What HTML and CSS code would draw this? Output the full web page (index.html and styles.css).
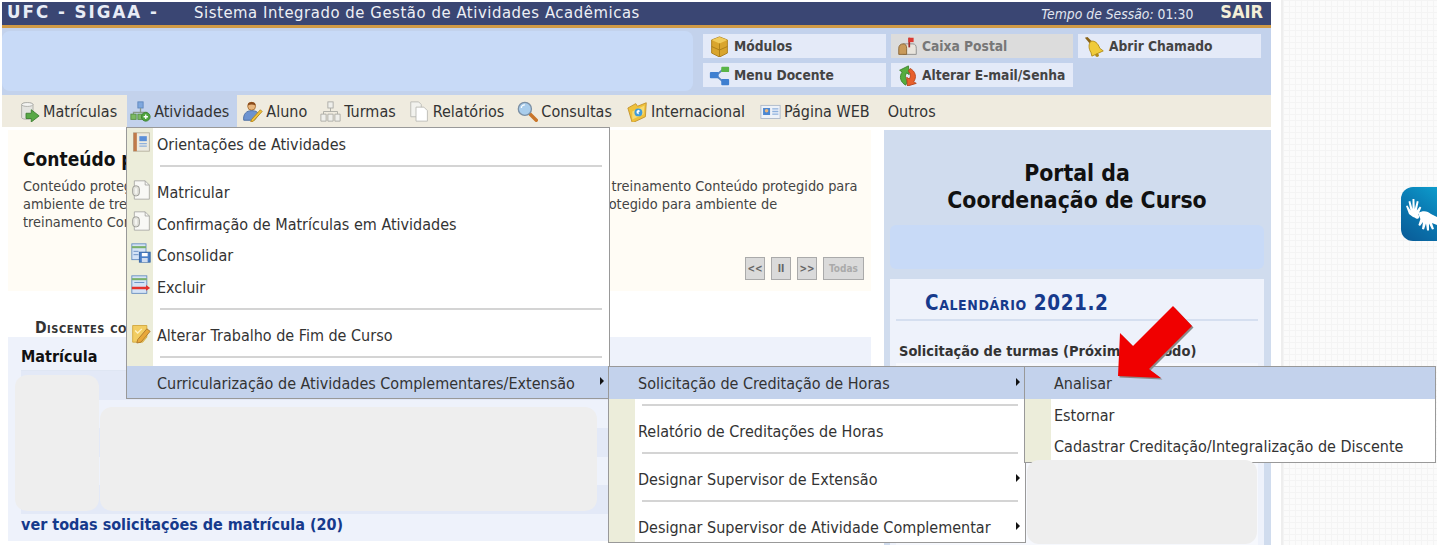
FILE: index.html
```html
<!DOCTYPE html>
<html lang="pt-BR">
<head>
  <meta charset="UTF-8">
  <title>UFC - SIGAA - Portal da Coordenação de Curso</title>
  <link rel="stylesheet" href="styles.css">
</head>
<body>
  <svg class="defs" width="0" height="0">
    <defs>
      <symbol id="i-matriculas" viewBox="0 0 24 24">
        <path d="M3 4c0-2.500 13-2.500 13 0v15c0 2.500-13 2.500-13 0z" fill="#e4e4e0" stroke="#a9a9a4"/>
        <ellipse cx="9.500" cy="4" rx="6.500" ry="2.200" fill="#f4f4f2" stroke="#a9a9a4"/>
        <path d="M8 14h6v-4l9 7-9 7v-4H8z" fill="#58a845" stroke="#3c7e30"/>
      </symbol>
      <symbol id="i-atividades" viewBox="0 0 24 24">
        <rect x="9" y="1" width="6" height="7" fill="#7fa8de" stroke="#5d86bd"/>
        <path d="M12 8v5M4 15v-2h15v2" fill="none" stroke="#8a9a8a" stroke-width="1.500"/>
        <rect x="1" y="15" width="6" height="6" fill="#7cba62" stroke="#558f41"/>
        <rect x="9" y="15" width="6" height="6" fill="#7cba62" stroke="#558f41"/>
        <circle cx="18" cy="18" r="5" fill="#4fa53d" stroke="#3c7e30"/>
        <path d="M15.500 18h5M18 15.500v5" stroke="#fff" stroke-width="1.500"/>
      </symbol>
      <symbol id="i-aluno" viewBox="0 0 24 24">
        <circle cx="11" cy="6" r="4.500" fill="#e8b67e" stroke="#a86f34"/>
        <path d="M6.500 5c0-5 9-5 9 0-3-1.500-6-1.500-9 0z" fill="#8a4b1c"/>
        <path d="M2 22c-1-7 3-11 9-11 5 0 8 2 8 5l-5 6z" fill="#6d93d0" stroke="#45689f"/>
        <path d="M11 21l10-11 2 2-10 11-3 1z" fill="#f2c33c" stroke="#b5861b"/>
      </symbol>
      <symbol id="i-turmas" viewBox="0 0 24 24">
        <rect x="9" y="1" width="6" height="7" fill="#efefeb" stroke="#a9a9a4"/>
        <path d="M12 8v4M4 15v-3h16v3" fill="none" stroke="#a9a9a4"/>
        <path d="M1 15h6v8H1zM9 15h6v8H9zM17 15h6v8h-6z" fill="#efefeb" stroke="#a9a9a4"/>
      </symbol>
      <symbol id="i-doc" viewBox="0 0 24 24">
        <path d="M2 1h9l3 3v14H2z" fill="#f2f2ee" stroke="#b8b8b3"/>
        <path d="M8 7h9l4 4v12H8z" fill="#fff" stroke="#b8b8b3"/>
      </symbol>
      <symbol id="i-consultas" viewBox="0 0 24 24">
        <path d="M14 14l8 8" stroke="#c9752a" stroke-width="4" stroke-linecap="round"/>
        <circle cx="9" cy="9" r="7.500" fill="#a9cdec" stroke="#7b8fa3" stroke-width="1.500"/>
        <path d="M5 8c0-2 2-3.500 4-3.500" fill="none" stroke="#fff" stroke-width="1.500"/>
      </symbol>
      <symbol id="i-internacional" viewBox="0 0 24 24">
        <path d="M1 8l9-5 2 3 10-4-1 16-15 7z" fill="#efc13a" stroke="#c2912a"/>
        <path d="M6 12l14-7-1 10-13 6z" fill="#f7da70"/>
        <circle cx="13" cy="13" r="4.500" fill="#3f9bd8"/>
        <path d="M11 11.500l2-1.500 2 1.500-2 2 1 2-3-1.500z" fill="#fff"/>
      </symbol>
      <symbol id="i-web" viewBox="0 0 24 24">
        <rect x="1" y="5" width="22" height="15" fill="#eef2f8" stroke="#aab6c8"/>
        <rect x="3.500" y="8" width="8" height="8" fill="#4b86d1"/>
        <circle cx="7.500" cy="11" r="2" fill="#e8b67e"/>
        <path d="M14 9h7M14 12h7M14 15h7" stroke="#8fb1dd" stroke-width="1.500"/>
      </symbol>
      <symbol id="i-modulos" viewBox="0 0 24 24">
        <path d="M12 1l9 3.500v15L12 24l-9-4.500v-15z" fill="#d9a52d" stroke="#a87a16"/>
        <path d="M3 4.500l9 4 9-4-9-3.500z" fill="#f0cb5a"/>
        <path d="M12 8.500V24M3 12l9 4 9-4" fill="none" stroke="#a87a16"/>
      </symbol>
      <symbol id="i-caixa" viewBox="0 0 24 24">
        <path d="M7 9h11c3 0 4 2 4 5v7H7z" fill="#e8e4dc" stroke="#888"/>
        <path d="M2 14c0-3 2-5 5-5s4 2 4 5v7H2z" fill="#c99a5a" stroke="#85602f"/>
        <rect x="13" y="2" width="2" height="11" fill="#a03030"/>
        <path d="M13 2h6v5h-6z" fill="#dc3a32"/>
      </symbol>
      <symbol id="i-sino" viewBox="0 0 24 24">
        <path d="M1 2l3-1 6 6-3 2z" fill="#8a6418"/>
        <path d="M8 6c4-1 8 2 10 8l4 3-13 6-1-4C5 14 5 9 8 6z" fill="#f0cb3a" stroke="#b08a18"/>
        <circle cx="15" cy="22" r="2" fill="#b08a18"/>
      </symbol>
      <symbol id="i-docente" viewBox="0 0 24 24">
        <path d="M8 12l8-7M8 12l8 7" stroke="#5d86bd" stroke-width="2"/>
        <rect x="1" y="8" width="10" height="7" rx="1" fill="#3f7fd0"/>
        <rect x="14" y="2" width="9" height="6" rx="1" fill="#5ab548"/>
        <rect x="14" y="16" width="9" height="7" rx="1" fill="#3f7fd0"/>
      </symbol>
      <symbol id="i-alterar" viewBox="0 0 24 24">
        <path d="M10 23C4 20 2 13 6 8L3 6l10-5 1 10-3-2c-2 3-2 6 1 9z" fill="#55ad3e" stroke="#3b7f2a"/>
        <path d="M15 4c6 3 8 10 4 15l3 2-10 3-1-10 3 2c2-3 2-6-1-9z" fill="#e8602c" stroke="#b5431a"/>
      </symbol>
      <symbol id="i-orientacoes" viewBox="0 0 24 24">
        <rect x="3" y="1" width="19" height="22" fill="#eceae0" stroke="#b0aa98"/>
        <rect x="3" y="1" width="4" height="22" fill="#c07a4a"/>
        <rect x="10" y="5" width="9" height="6" fill="#5b8fd8"/>
        <path d="M10 14h9M10 17h9" stroke="#8fb1dd" stroke-width="1.500"/>
      </symbol>
      <symbol id="i-clip" viewBox="0 0 24 24">
        <path d="M4 1h13l5 5v17H4z" fill="#f8f8f5" stroke="#a4a4a0"/>
        <path d="M17 1v5h5" fill="none" stroke="#a4a4a0"/>
        <rect x="2" y="7" width="8" height="12" rx="3.500" fill="#e2e2dc" stroke="#8f8f8a"/>
        <rect x="5" y="9.500" width="2" height="7" rx="1" fill="#f8f8f5"/>
      </symbol>
      <symbol id="i-consolidar" viewBox="0 0 24 24">
        <rect x="1" y="1" width="17" height="19" fill="#d5e3f6" stroke="#5d86bd"/>
        <path d="M1 5h17" stroke="#7ab06a" stroke-width="2.500"/>
        <path d="M3 10h6M3 14h6" stroke="#5d86bd"/>
        <rect x="10" y="11" width="13" height="12" fill="#4b80c8" stroke="#2f5f9f"/>
        <rect x="13" y="12" width="7" height="4" fill="#fff"/>
        <rect x="13" y="18" width="7" height="5" fill="#cfdcf0"/>
      </symbol>
      <symbol id="i-excluir" viewBox="0 0 24 24">
        <rect x="1" y="1" width="18" height="21" fill="#d5e3f6" stroke="#5d86bd"/>
        <path d="M1 5h18" stroke="#7ab06a" stroke-width="2.500"/>
        <path d="M4 9h12" stroke="#5d86bd"/>
        <path d="M1 14h17v-2l5 3.500-5 3.500v-2H1z" fill="#e4322c"/>
      </symbol>
      <symbol id="i-editar" viewBox="0 0 24 24">
        <path d="M2 3h17v14l-5 6H2z" fill="#f2cd62" stroke="#cfa436"/>
        <path d="M8 20l11-13 4 3-11 13-5 1z" fill="#e8a83a" stroke="#a8732a"/>
        <path d="M5 9l3 3 5-5" fill="none" stroke="#fff3c4" stroke-width="1.500"/>
      </symbol>
    </defs>
  </svg>

  <div class="tela">
    <div class="sistema">
      <header class="cabecalho">
        <span class="marca">UFC - SIGAA -</span>
        <span class="titulo">Sistema Integrado de Gestão de Atividades Acadêmicas</span>
        <span class="sessao"><em>Tempo de Sessão:</em> 01:30</span>
        <a class="sair">SAIR</a>
      </header>

      <div class="modulos">
        <div class="usuario"></div>
        <div class="atalhos">
          <a class="atalho"><svg class="ic-b"><use href="#i-modulos"/></svg>Módulos</a>
          <a class="atalho atalho-off"><svg class="ic-b"><use href="#i-caixa"/></svg>Caixa Postal</a>
          <a class="atalho"><svg class="ic-b"><use href="#i-sino"/></svg>Abrir Chamado</a>
          <a class="atalho"><svg class="ic-b"><use href="#i-docente"/></svg>Menu Docente</a>
          <a class="atalho"><svg class="ic-b"><use href="#i-alterar"/></svg>Alterar E-mail/Senha</a>
        </div>
      </div>

      <nav class="menubar">
        <a class="menu-item"><svg class="ic"><use href="#i-matriculas"/></svg>Matrículas</a>
        <a class="menu-item ativo"><svg class="ic"><use href="#i-atividades"/></svg>Atividades</a>
        <a class="menu-item"><svg class="ic"><use href="#i-aluno"/></svg>Aluno</a>
        <a class="menu-item"><svg class="ic"><use href="#i-turmas"/></svg>Turmas</a>
        <a class="menu-item"><svg class="ic"><use href="#i-doc"/></svg>Relatórios</a>
        <a class="menu-item"><svg class="ic"><use href="#i-consultas"/></svg>Consultas</a>
        <a class="menu-item largo"><svg class="ic"><use href="#i-internacional"/></svg>Internacional</a>
        <a class="menu-item largo"><svg class="ic"><use href="#i-web"/></svg>Página WEB</a>
        <a class="menu-item outros">Outros</a>
      </nav>

      <div class="colunas">
        <main class="esquerda">
          <section class="aviso">
            <h3>Conteúdo protegido</h3>
            <p>Conteúdo protegido para ambiente de treinamento Conteúdo protegido para ambiente de treinamento Conteúdo protegido para<br>ambiente de treinamento Conteúdo protegido para ambiente de treinamento Conteúdo protegido para ambiente de<br>treinamento Conteúdo protegido</p>
            <div class="controles">
              <button>&lt;&lt;</button>
              <button>II</button>
              <button>&gt;&gt;</button>
              <button class="todas">Todas</button>
            </div>
          </section>

          <h4 class="secao">Discentes com solicitações</h4>
          <section class="tabela">
            <div class="th">Matrícula</div>
            <div class="linha escura"></div>
            <div class="linha"></div>
            <div class="linha escura"></div>
            <div class="linha"></div>
            <div class="linha escura"></div>
            <a class="ver-todas">ver todas solicitações de matrícula (20)</a>
          </section>
        </main>

        <aside class="direita">
          <h2>Portal da<br>Coordenação de Curso</h2>
          <div class="painel-azul"></div>
          <div class="calendario">
            <h3>Calendário 2021.2</h3>
            <h5>Solicitação de turmas (Próximo Período)</h5>
            <div class="cal-linha"></div>
          </div>
        </aside>
      </div>
    </div>
    <div class="margem"></div>
    <div class="fundo"></div>
  </div>

  <!-- menus abertos -->
  <ul class="submenu sub1">
    <li><svg class="ic-m"><use href="#i-orientacoes"/></svg>Orientações de Atividades</li>
    <li class="sep"></li>
    <li><svg class="ic-m"><use href="#i-clip"/></svg>Matricular</li>
    <li><svg class="ic-m"><use href="#i-clip"/></svg>Confirmação de Matrículas em Atividades</li>
    <li><svg class="ic-m"><use href="#i-consolidar"/></svg>Consolidar</li>
    <li><svg class="ic-m"><use href="#i-excluir"/></svg>Excluir</li>
    <li class="sep"></li>
    <li><svg class="ic-m"><use href="#i-editar"/></svg>Alterar Trabalho de Fim de Curso</li>
    <li class="sep"></li>
    <li class="sel seta">Curricularização de Atividades Complementares/Extensão</li>
  </ul>
  <ul class="submenu sub2">
    <li class="sel seta">Solicitação de Creditação de Horas</li>
    <li class="sep"></li>
    <li>Relatório de Creditações de Horas</li>
    <li class="sep"></li>
    <li class="seta">Designar Supervisor de Extensão</li>
    <li class="sep"></li>
    <li class="seta">Designar Supervisor de Atividade Complementar</li>
  </ul>
  <ul class="submenu sub3">
    <li class="sel">Analisar</li>
    <li>Estornar</li>
    <li>Cadastrar Creditação/Integralização de Discente</li>
  </ul>

  <!-- tarjas sobre dados pessoais -->
  <div class="tarja t1"></div>
  <div class="tarja t2"></div>
  <div class="tarja t3"></div>

  <svg class="seta-vermelha" viewBox="0 0 90 85">
    <polygon points="64.500,7.500 83.500,27.500 40.500,70.500 52.500,79.500 9.500,77.500 11.500,34.500 24.500,47.500" fill="#8a8a8a"/>
    <polygon points="63,6 82,26 39,69 51,78 8,76 10,33 23,46" fill="#f00000"/>
  </svg>

  <div class="libras">
    <svg viewBox="0 0 36 54" width="36" height="54">
      <path d="M12 30l-4-3-3-8 1.500-.5 3 5-2-9 1.800-.4 2.200 8 0-10h1.900l.4 10 2-8 1.800.5-1.800 9 3-4 1.500 1-3 7c2 3 0 6-3.800 3z" fill="#fff"/>
      <path d="M17 26c5-3 10-2 13 1l6 3v8l-5-2 2 6-2 .6-3-6 0 7-2 0-1-7-2 6-2-.5 1-7-3 4-1.600-1 2-6z" fill="#fff"/>
    </svg>
  </div>
</body>
</html>
```

FILE: styles.css
```css
html, body {
  margin: 0;
  height: 545px;
  overflow: hidden;
}
body {
  position: relative;
  font-family: "DejaVu Sans Condensed", "DejaVu Sans", sans-serif;
  font-stretch: condensed;
  color: #333;
  background-color: #fff;
}
.defs {
  position: absolute;
}
.tela {
  display: flex;
  height: 545px;
}
.sistema {
  width: 1269px;
  flex: none;
  padding: 2px 0 0 2px;
}
.margem {
  width: 10px;
  flex: none;
  border-right: 2px solid #eee;
}
.fundo {
  flex: 1;
  background-color: #fbfbfb;
  background-image:
    linear-gradient(#f4f4f4 1px, transparent 1px),
    linear-gradient(90deg, #f4f4f4 1px, transparent 1px);
  background-size: 6px 6px;
}

/* cabecalho */
.cabecalho {
  display: flex;
  align-items: center;
  height: 23px;
  background-color: #3a4673;
  border-bottom: 3px solid #d09a45;
  color: #fff;
}
.marca {
  width: 192px;
  padding: 0 0 5px 5px;
  box-sizing: border-box;
  font-weight: bold;
  font-size: 18.5px;
  letter-spacing: 2px;
  flex: none;
  color: #e8ecf6;
}
.titulo {
  padding-bottom: 2px;
  font-size: 16.5px;
  letter-spacing: .57px;
  flex: none;
  color: #eef0f6;
}
.sessao {
  margin-left: auto;
  font-size: 13.8px;
  color: #e2e6f0;
}
.sair {
  padding-bottom: 4px;
  margin: 0 8px 0 27px;
  font-weight: bold;
  font-size: 18px;
  color: #f4efd8;
}

/* faixa de modulos */
.modulos {
  display: flex;
  justify-content: space-between;
  height: 67px;
  background-color: #c3d2ec;
  box-sizing: border-box;
  padding: 3px 10px 0 0;
}
.usuario {
  width: 691px;
  height: 60px;
  background-color: #c8daf7;
  border-radius: 8px;
}
.atalhos {
  display: grid;
  grid-template-columns: 183px 182px 183px;
  grid-auto-rows: 24px;
  column-gap: 5px;
  row-gap: 5px;
  padding-top: 3px;
}
.atalho {
  display: flex;
  align-items: center;
  gap: 4px;
  padding-left: 6px;
  background-color: #e4eaf8;
  font-size: 13.7px;
  font-weight: bold;
  color: #444;
}
.atalho-off {
  background-color: #dcdcdc;
  color: #777;
}
.ic-b {
  width: 21px;
  height: 21px;
  flex: none;
}

/* barra de menu */
.menubar {
  display: flex;
  gap: 2px;
  height: 32px;
  padding-left: 14px;
  background-color: #efebdf;
}
.menu-item {
  display: flex;
  align-items: center;
  gap: 3px;
  padding: 1px 8px 0 3px;
  font-size: 16px;
  color: #333;
}
.menu-item.ativo {
  background-color: #c3d2ec;
}
.menu-item.largo {
  margin-left: 2px;
}
.menu-item.outros {
  margin-left: 5px;
}
.ic {
  width: 21px;
  height: 21px;
  flex: none;
}

/* colunas */
.colunas {
  display: flex;
  justify-content: space-between;
  padding: 3px 0 0 6px;
}
.esquerda {
  width: 863px;
}
.aviso {
  height: 161px;
  box-sizing: border-box;
  padding: 18px 7px 0 15px;
  background-color: #fffcf5;
}
.aviso h3 {
  margin: 0 0 7px;
  font-size: 19px;
  color: #111;
}
.aviso p {
  margin: 0;
  font-size: 14.4px;
  line-height: 18px;
  white-space: nowrap;
  color: #444;
}
.controles {
  display: flex;
  justify-content: flex-end;
  gap: 6px;
  margin-top: 26px;
}
.controles button {
  width: 20px;
  height: 23px;
  padding: 0;
  border: 1px solid #aaa;
  background-color: #dadada;
  font-family: inherit;
  font-size: 10px;
  font-weight: bold;
  color: #666;
}
.controles .todas {
  width: 41px;
  color: #aaa;
}
.secao {
  margin: 28px 0 0 27px;
  height: 18px;
  font-size: 15.5px;
  font-variant: small-caps;
  letter-spacing: .5px;
  color: #333;
}
.tabela {
  height: 204px;
  box-sizing: border-box;
  padding: 0 0 0 13px;
  background-color: #eef2fb;
}
.th {
  height: 34px;
  line-height: 39px;
  font-size: 16px;
  font-weight: bold;
  color: #111;
  border-bottom: 1px solid #dfe6f3;
  box-sizing: border-box;
}
.linha {
  height: 28.6px;
}
.linha.escura {
  background-color: #e3e9f7;
}
.ver-todas {
  display: block;
  line-height: 22px;
  font-size: 16px;
  font-weight: bold;
  color: #163a8c;
}

/* coluna direita */
.direita {
  width: 387px;
  height: 416px;
  box-sizing: border-box;
  padding: 0 7px 0 6px;
  background-color: #d0dcee;
}
.direita h2 {
  margin: 0;
  padding-top: 30px;
  height: 94px;
  font-size: 22.8px;
  line-height: 27px;
  text-align: center;
  color: #111;
}
.painel-azul {
  height: 44px;
  background-color: #c8daf7;
  border-radius: 6px;
  margin-top: -29px;
}
.calendario {
  height: 266px;
  margin-top: 10px;
  padding: 0 6px;
  background-color: #eef2fb;
}
.calendario h3 {
  margin: 0;
  padding: 12px 0 4px 29px;
  font-size: 20.5px;
  font-variant: small-caps;
  letter-spacing: .6px;
  color: #163a8c;
  border-bottom: 2px solid #d5dff0;
}
.calendario h5 {
  margin: 22px 0 0 3px;
  font-size: 14.5px;
  color: #333;
}
.cal-linha {
  height: 184px;
  margin-top: 4px;
  background-color: #f6f8fd;
}

/* menus abertos */
.submenu {
  position: absolute;
  margin: 0;
  padding: 0;
  list-style: none;
  background: linear-gradient(90deg, #ecedda 26px, #fff 26px);
  border: 1px solid #999;
  font-size: 16px;
  color: #333;
}
.submenu li {
  position: relative;
  display: flex;
  align-items: center;
  box-sizing: border-box;
  height: 31.6px;
  padding: 2px 0 0 30px;
}
.submenu li.sep {
  height: 16.3px;
  padding: 0;
}
.submenu li.sep::before {
  content: "";
  flex: 1;
  height: 2px;
  margin: -3px 7px 0 33px;
  background-color: #d4d4d4;
}
.submenu li.sel {
  background-color: #c3d2ec;
}
.submenu li.seta::after {
  content: "";
  position: absolute;
  right: 5px;
  top: 11px;
  border-left: 4px solid #111;
  border-top: 4px solid transparent;
  border-bottom: 4px solid transparent;
}
.ic-m {
  position: absolute;
  left: 4px;
  top: 3px;
  width: 20px;
  height: 22px;
}
.sub1 {
  left: 126px;
  top: 127px;
  width: 482px;
}
.sub2 {
  left: 608px;
  top: 366px;
  width: 416px;
}
.sub2 li, .sub3 li {
  padding-left: 29px;
}
.sub3 {
  left: 1024px;
  top: 366px;
  width: 410px;
}
.sub2 li.sep, .sub3 li.sep {
  padding-left: 0;
}

/* tarjas */
.tarja {
  position: absolute;
  background-color: #eee;
  border-radius: 12px;
}
.t1 {
  left: 15px;
  top: 375px;
  width: 84px;
  height: 136px;
}
.t2 {
  left: 100px;
  top: 407px;
  width: 497px;
  height: 104px;
}
.t3 {
  left: 1027px;
  top: 460px;
  width: 230px;
  height: 84px;
}

.seta-vermelha {
  position: absolute;
  left: 1110px;
  top: 300px;
  width: 90px;
  height: 85px;
}
.libras {
  position: absolute;
  left: 1401px;
  top: 187px;
  width: 36px;
  height: 54px;
  border-radius: 12px 0 0 12px;
  background: linear-gradient(35deg, #0a5a96, #0a7cb4 60%, #0d9ccc);
}
```
